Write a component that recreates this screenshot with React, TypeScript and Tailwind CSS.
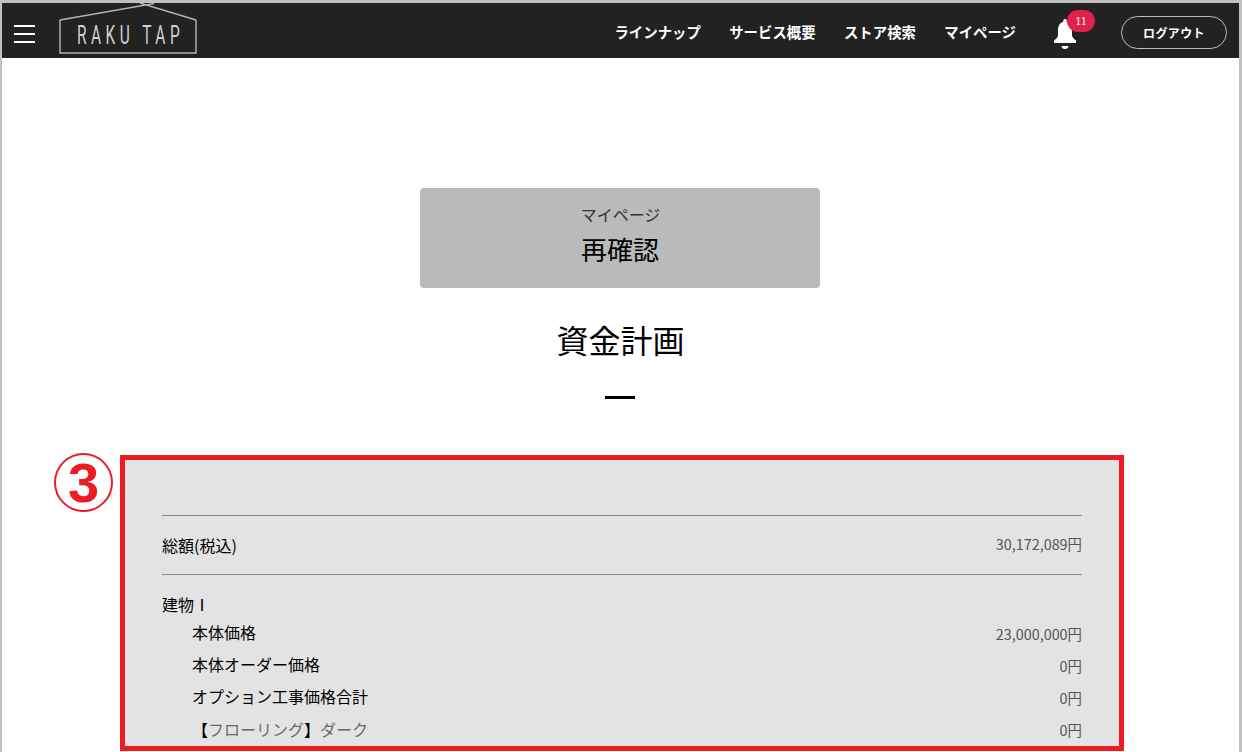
const FONT = "font-['Noto_Sans_CJK_JP','Noto_Sans',sans-serif]";

const navItems = ['ラインナップ', 'サービス概要', 'ストア検索', 'マイページ'];

function Logo() {
  return (
    <svg className="w-[140px] h-[52px] ml-[23px] -mt-[3px] shrink-0" viewBox="0 0 140 52" fill="none">
      <path d="M2 17 L96 0.5 M138 17 L82 0 M2 17 V50 H138 V17" stroke="#b5b5b5" strokeWidth="1.4" />
      <text
        transform="translate(19 41) scale(0.62 1)"
        fill="#d0d0d0"
        fontSize="25"
        letterSpacing="7.2"
        fontFamily="'Roboto', sans-serif"
        fontWeight="400"
      >
        RAKU TAP
      </text>
    </svg>
  );
}

function Header() {
  return (
    <header className="h-[55px] bg-[#222222] flex items-center text-white shrink-0 pl-[12px]">
      <div className="flex flex-col gap-[6px] w-[21px] mt-[6px]">
        <span className="h-[2px] bg-white" />
        <span className="h-[2px] bg-white" />
        <span className="h-[2px] bg-white" />
      </div>
      <Logo />
      <nav className="flex items-center gap-[28.4px] ml-auto mt-[3px] text-[14.4px] font-bold leading-none whitespace-nowrap">
        {navItems.map((item) => (
          <a key={item}>{item}</a>
        ))}
      </nav>
      <div className="relative ml-[37px] w-[24px] h-[33px] mt-[6px]">
        <svg className="w-[24px] h-[33px]" viewBox="0 0 24 33" fill="white">
          <path d="M12 2c-1 0-1.7.7-1.7 1.7v1C6.8 5.7 5 9 5 13v5c0 2-1.6 3.8-4 5.4V26h22v-2.6c-2.4-1.6-4-3.4-4-5.4v-5c0-4-1.8-7.3-5.3-8.3v-1C13.7 2.7 13 2 12 2z" />
          <path d="M8.5 29h7c0 1.8-1.5 3-3.5 3s-3.5-1.2-3.5-3z" />
        </svg>
        <span className="absolute -top-[7px] left-[14px] w-[28px] h-[22px] rounded-full bg-[#e0214b] text-[12px] leading-[22px] text-center font-['Liberation_Serif',serif]">
          11
        </span>
      </div>
      <button className="ml-[44px] mr-[12px] w-[106px] h-[33px] mt-[4px] rounded-full border border-[#bdbdbd] text-[12px] font-bold tracking-[0.03em]">
        ログアウト
      </button>
    </header>
  );
}

function Row({ label, value, indent, className, valueClass }: { label?: React.ReactNode; value?: string; indent?: boolean; className?: string; valueClass?: string }) {
  return (
    <div className={`flex justify-between items-center text-[16px] h-[32px] ${className ?? ''}`}>
      <span className={`${indent ? 'pl-[30px]' : ''} text-black`}>{label}</span>
      <span className={`text-[14.4px] text-[#555555] ${valueClass ?? 'mt-[4px]'}`}>{value}</span>
    </div>
  );
}

export default function App() {
  return (
    <div className={`w-[1242px] h-[752px] overflow-hidden bg-white border-t-[3px] border-l-2 border-r-[3px] border-[#c0c0c0] flex flex-col ${FONT}`}>
      <Header />
      <main className="flex flex-col items-center">
        <div className="mt-[130px] w-[400px] h-[100px] -ml-[2px] pb-[1px] bg-[#bababa] rounded-[4px] flex flex-col items-center justify-center">
          <p className="text-[16px] leading-[24px] text-[#333333] ml-[2px]">マイページ</p>
          <p className="text-[26px] leading-[45px] mb-[2px] ml-[1px] text-black">再確認</p>
        </div>
        <h1 className="mt-[27px] text-[32px] leading-[48px] text-black">資金計画</h1>
        <div className="mt-[33px] -ml-[1px] w-[30px] h-[3px] bg-black" />
        <div className="mt-[56px] self-start ml-[52px] flex items-start gap-[7px]">
          <div className="w-[59px] h-[59px] -mt-[2px] shrink-0 rounded-full border-2 border-[#ed1c24] flex items-center justify-center text-[#ed1c24] text-[56px] font-bold leading-none font-['Liberation_Sans',sans-serif]">
            3
          </div>
          <section className="w-[1004px] h-[296px] border-[5px] border-[#ed1c24] bg-[#e3e3e3] px-[37px] pt-[55px]">
            <div className="border-t border-[#888888]">
              <Row label="総額(税込)" value="30,172,089円" className="h-[58px]" valueClass="-mt-[3px]" />
            </div>
            <div className="border-t border-[#888888] pt-[13px]">
              <div className="text-[16px] leading-[32px] h-[28px] text-black">建物Ⅰ</div>
              <Row label="本体価格" value="23,000,000円" indent />
              <Row label="本体オーダー価格" value="0円" indent />
              <Row label="オプション工事価格合計" value="0円" indent />
              <Row
                label={
                  <span className="text-[#6a6a6a] relative top-[1px]">
                    <span className="text-black">【</span>フローリング<span className="text-black">】</span>ダーク
                  </span>
                }
                value="0円"
                indent
              />
            </div>
          </section>
        </div>
      </main>
    </div>
  );
}
